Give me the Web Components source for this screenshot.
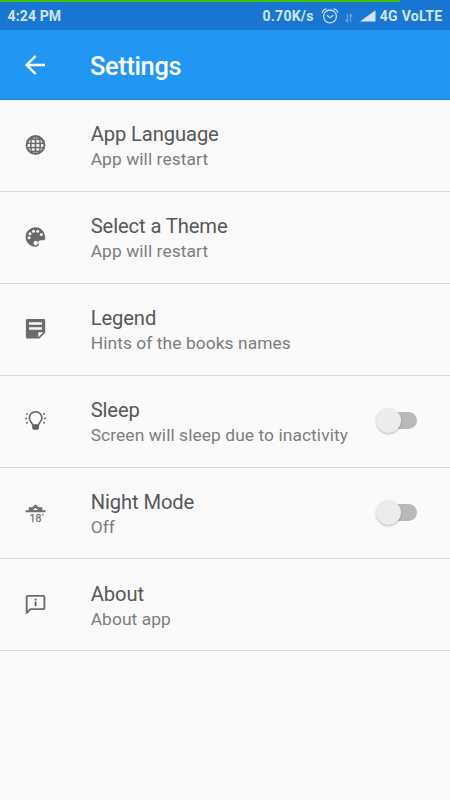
<!DOCTYPE html>
<html lang="en">
<head>
<meta charset="utf-8">
<title>Settings</title>
<style>
html,body{margin:0;height:100%;background:#fafafa}
body{font-family:Roboto,"Noto Sans",sans-serif;overflow:hidden}
</style>
</head>
<body>
<settings-app></settings-app>
<script>
const icons = {
globe:`<circle cx="12" cy="12" r="9.9" fill="#6b6b6b"/><g fill="#f2f2f2"><rect x="8.3" y="7.1" width="2.9" height="2.6"/><rect x="12.8" y="7.1" width="2.9" height="2.6"/><rect x="8.1" y="11.1" width="3.1" height="2.8"/><rect x="12.8" y="11.1" width="3.1" height="2.8"/><rect x="8.3" y="15.3" width="2.9" height="2.3"/><rect x="12.8" y="15.3" width="2.9" height="2.3"/><path d="M4.9 9.8 6.4 7.1h.7l-.5 2.7zM19.1 9.8l-1.5-2.7h-.7l.5 2.7zM4.2 11.1h2.3v2.8H4.2zM17.5 11.1h2.3v2.8h-2.3zM5 15.3h1.6l.6 2.3h-.6zM19 15.3h-1.6l-.6 2.3h.6zM9.4 5.7l1.8-1.5v1.5zM14.6 5.7l-1.8-1.5v1.5zM9.4 18.9h1.8v1.2zM14.6 18.9h-1.8v1.2z"/></g>`,
palette:`<path fill="#696969" d="M12 2.3a9.7 9.7 0 1 0 1.2 19.3c1.6-.4 2.500-1.700 1.900-2.900-1-1.800-.1-3.300 1.600-3.500h3.600c1.200 0 1.600-1.500 1.400-3.100C21.2 6.3 17 2.3 12 2.3z"/><g fill="#f5f5f5"><circle cx="5.6" cy="12.8" r="1.5"/><circle cx="6.500" cy="8.7" r="1.5"/><circle cx="10" cy="6.2" r="1.5"/><circle cx="14.2" cy="6.3" r="1.5"/><circle cx="17.9" cy="9.6" r="1.5"/><circle cx="12.2" cy="18" r="2.2"/></g>`,
note:`<path fill="#6b6b6b" fill-rule="evenodd" d="M4 2h16.2c1 0 1.5.6 1.5 1.5v12.2L15.9 21.5H4c-1 0-1.6-.6-1.6-1.5V3.5C2.4 2.6 3 2 4 2zM5.500 5.300v2.500h13V5.300zM5.500 10.200v2.500h13v-2.500zM14.800 15.300v4.900l5-4.900z"/>`,
bulb:`<path fill="none" stroke="#606060" stroke-width="1.6" d="M9.200 16c0-2.200-3.400-3.200-3.400-7a6.300 6.300 0 0 1 12.600 0c0 3.800-3.400 4.800-3.400 7z"/><path fill="#606060" d="M8.700 16h6.800v3c0 1-1 1.800-2 1.800h-2.800c-1 0-2-.8-2-1.800z"/><g fill="#606060"><circle cx="3.500" cy="5" r=".95"/><circle cx="2.600" cy="9.400" r=".95"/><circle cx="3.500" cy="13.800" r=".95"/><circle cx="20.600" cy="5" r=".95"/><circle cx="21.500" cy="9.400" r=".95"/><circle cx="20.600" cy="13.800" r=".95"/></g>`,
night:`<path fill="#707070" fill-rule="evenodd" d="M2 11.300V9.300H5.300V6.300H8.700L12 3.500l3.300 2.800h3.400v3H22v2zM9.300 9h5.400L12 7z"/><text x="6.100" y="20.600" font-family="Roboto" font-size="10.500" font-weight="400" stroke="#707070" stroke-width=".25" fill="#707070">18</text><circle cx="19.300" cy="13.700" r=".9" fill="#808080"/>`,
about:`<path fill="none" stroke="#6d6d6d" stroke-width="1.900" stroke-linejoin="round" d="M3.200 19.900V4c0-.7.400-1.100 1.100-1.100h15.500c.7 0 1.100.4 1.100 1.100v11c0 .7-.4 1.100-1.100 1.100H7z"/><path fill="#606060" d="M11.200 5.600H13v1.800h-1.800zM11.200 8.600H13v4.600h-1.800z"/>`
};
class StatusBar extends HTMLElement{constructor(){super();this.attachShadow({mode:'open'}).innerHTML=`<style>
:host{display:flex;box-sizing:border-box;height:30px;padding:2px 7.5px 0;background:linear-gradient(#43c000,#43c000) 0 0/400px 2px no-repeat #1976d2;color:#d1e4f6;font-size:14px;letter-spacing:.13px;font-weight:700;align-items:center;line-height:27px}
.end{margin-left:auto;display:flex;align-items:center}
svg{display:block;margin-top:-1px}.speed{letter-spacing:.25px}.alarm{margin-left:7px}.data{margin-left:6px}.sig{margin-left:7px}.net{margin-left:4px;letter-spacing:.3px}
</style><span class="time">4:24 PM</span><div class="end"><span class="speed">0.70K/s</span>
<svg class="alarm" width="18" height="18" viewBox="0 0 18 18" fill="none" stroke="#c5ddf4" stroke-width="1.3" stroke-linecap="round"><circle cx="9" cy="9.4" r="6.4"/><path d="M6.3 8.4 9 10.7l3-2.3M1.3 5.3A5 5 0 0 1 5 1.8M16.7 5.3A5 5 0 0 0 13 1.8"/></svg>
<svg class="data" width="8" height="10" viewBox="0 0 8 10" fill="none" stroke="#6da7e2" stroke-width="1.2" style="margin-top:3px"><path d="M2.5 1v7.500L.5 6.500M5.500 9V1.500l2 2"/></svg>
<svg class="sig" width="16" height="12" viewBox="0 0 16 12"><path d="M0 11.500 15.500.3v11.200z" fill="#d1e4f6"/></svg>
<span class="net">4G VoLTE</span></div>`}}
customElements.define('status-bar',StatusBar);
class AppBar extends HTMLElement{constructor(){super();this.attachShadow({mode:'open'}).innerHTML=`<style>
:host{display:flex;box-sizing:border-box;height:70px;background:#2196f3;border-bottom:1px solid #1e88de;color:#fff;align-items:center;padding-left:23px}
svg{width:24px;margin-right:43px;display:block}
h1{margin:3px 0 0;font-size:25.4px;font-weight:500;line-height:30px;letter-spacing:-.35px}
</style><svg height="24" viewBox="0 0 24 24"><path d="M22 12H4M12.6 3 3.6 12l9 9" fill="none" stroke="#fff" stroke-width="2.4"/></svg><h1><slot></slot></h1>`}}
customElements.define('app-bar',AppBar);
class SettingIcon extends HTMLElement{connectedCallback(){if(this.shadowRoot)return;this.attachShadow({mode:'open'}).innerHTML=`<style>:host{display:block;width:24px;height:24px}svg{display:block}</style><svg width="24" height="24" viewBox="-.5 0 24 24">${icons[this.getAttribute('name')]}</svg>`}}
customElements.define('setting-icon',SettingIcon);
class ToggleSwitch extends HTMLElement{constructor(){super();this.attachShadow({mode:'open'}).innerHTML=`<style>
:host{display:flex;align-items:center;box-sizing:border-box;width:37px;height:17px;border-radius:9px;background:#b9b9b9;margin-bottom:1px}
i{display:block;flex:none;width:25px;height:25px;border-radius:50%;background:#ececec;box-shadow:0 1px 2px #0004;margin-left:-4px}
</style><i></i>`}}
customElements.define('toggle-switch',ToggleSwitch);
class SettingRow extends HTMLElement{connectedCallback(){if(this.shadowRoot)return;this.attachShadow({mode:'open'}).innerHTML=`<style>
:host{display:flex;box-sizing:border-box;height:91.9px;border-bottom:1px solid #dadada;align-items:center;padding:0 33.5px 0 23px}
.text{flex:1;margin-left:43.7px;padding-top:2px}
.t{font-size:20.2px;line-height:26px;color:#575757;letter-spacing:-.11px}
.s{font-size:17.4px;line-height:24px;color:#7d7d7d;letter-spacing:.07px}
</style><setting-icon name="${this.getAttribute('icon')}"></setting-icon><div class="text"><div class="t"><slot></slot></div><div class="s"><slot name="summary"></slot></div></div><slot name="control"></slot>`}}
customElements.define('setting-row',SettingRow);
class SettingsApp extends HTMLElement{constructor(){super();this.attachShadow({mode:'open'}).innerHTML=`<style>:host{display:flex;flex-direction:column;height:100vh;background:#fafafa}main{display:block}</style>
<status-bar></status-bar><app-bar>Settings</app-bar><main>
<setting-row icon="globe">App Language<span slot="summary">App will restart</span></setting-row>
<setting-row icon="palette">Select a Theme<span slot="summary">App will restart</span></setting-row>
<setting-row icon="note">Legend<span slot="summary">Hints of the books names</span></setting-row>
<setting-row icon="bulb">Sleep<span slot="summary">Screen will sleep due to inactivity</span><toggle-switch slot="control"></toggle-switch></setting-row>
<setting-row icon="night">Night Mode<span slot="summary">Off</span><toggle-switch slot="control"></toggle-switch></setting-row>
<setting-row icon="about">About<span slot="summary">About app</span></setting-row></main>`}}
customElements.define('settings-app',SettingsApp);
</script>
</body>
</html>
